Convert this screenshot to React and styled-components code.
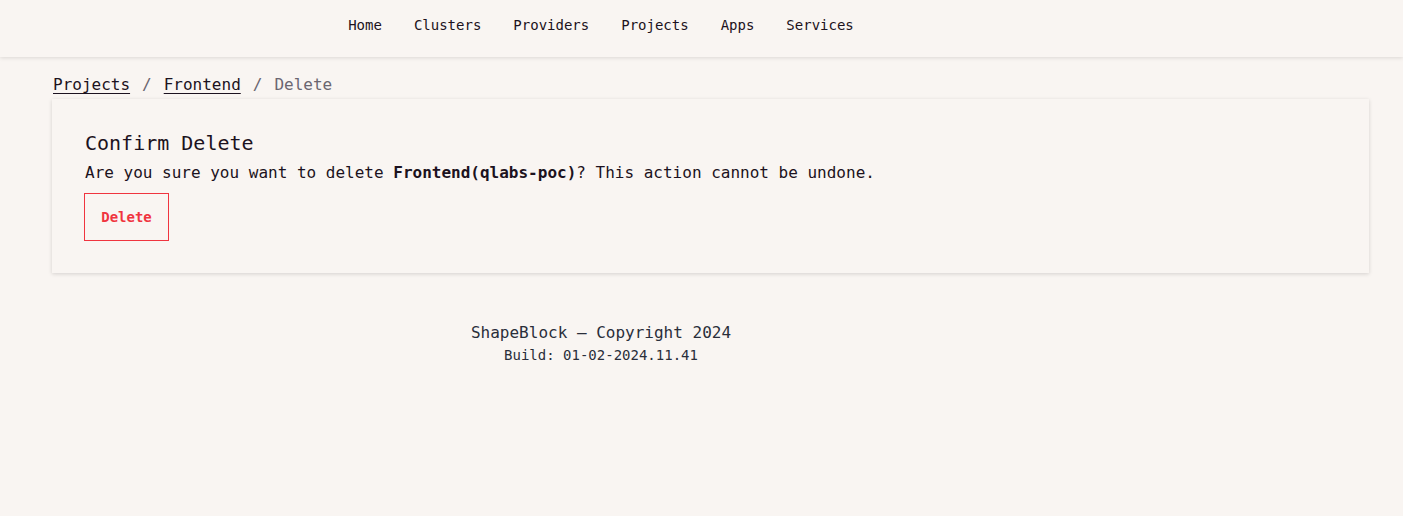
import React from "react";
import styled, { createGlobalStyle } from "styled-components";

const GlobalStyle = createGlobalStyle`
  body {
    margin: 0;
    background: #f9f5f2;
    color: #1c1220;
    font-family: "DejaVu Sans Mono", "Liberation Mono", monospace;
  }
`;

const NavBar = styled.header`
  height: 57px;
  background: #f9f5f2;
  box-shadow: 0 1px 4px rgba(0, 0, 0, 0.12);
`;

const NavList = styled.nav`
  width: 1202px;
  height: 50px;
  display: flex;
  justify-content: center;
  align-items: center;
  gap: 32px;
`;

const NavLink = styled.a`
  font-size: 14px;
  color: #1c1220;
  text-decoration: none;
`;

const Main = styled.main`
  padding: 16px 34px 0 52px;
`;

const Crumbs = styled.div`
  display: flex;
  gap: 12px;
  font-size: 16px;
  line-height: 24px;
  padding-left: 1px;
  color: #6b6670;
`;

const CrumbLink = styled.a`
  color: #1c1220;
  text-decoration: underline;
  text-underline-offset: 3px;
`;

const Card = styled.section`
  margin-top: 2px;
  padding: 32px 32px 32px 33px;
  background: #f9f5f2;
  box-shadow: 0 1px 4px rgba(0, 0, 0, 0.15);
`;

const Title = styled.h2`
  margin: 0;
  font-size: 20px;
  font-weight: 400;
  line-height: 24px;
`;

const Message = styled.p`
  margin: 6px 0 0;
  font-size: 16px;
  line-height: 24px;
`;

const DangerButton = styled.button`
  margin: 8px 0 0 -1px;
  height: 48px;
  width: 85px;
  background: transparent;
  border: 1px solid #f0343f;
  color: #f0343f;
  font-family: inherit;
  font-size: 14px;
  font-weight: 700;
  cursor: pointer;
  display: block;
`;

const Footer = styled.footer`
  width: 1202px;
  margin-top: 48px;
  text-align: center;
  color: #2a2e3a;
`;

const FooterLine = styled.div`
  font-size: ${(p) => (p.small ? "14px" : "16px")};
  line-height: ${(p) => (p.small ? "20px" : "24px")};
`;

const App = () => {
  const links = ["Home", "Clusters", "Providers", "Projects", "Apps", "Services"];
  return (
    <>
      <GlobalStyle />
      <NavBar>
        <NavList>
          {links.map((l) => (
            <NavLink key={l} href="#">{l}</NavLink>
          ))}
        </NavList>
      </NavBar>
      <Main>
        <Crumbs>
          <CrumbLink href="#">Projects</CrumbLink>
          <span>/</span>
          <CrumbLink href="#">Frontend</CrumbLink>
          <span>/</span>
          <span>Delete</span>
        </Crumbs>
        <Card>
          <Title>Confirm Delete</Title>
          <Message>
            Are you sure you want to delete <b>Frontend(qlabs-poc)</b>? This action cannot be undone.
          </Message>
          <DangerButton>Delete</DangerButton>
        </Card>
      </Main>
      <Footer>
        <FooterLine>ShapeBlock — Copyright 2024</FooterLine>
        <FooterLine small>Build: 01-02-2024.11.41</FooterLine>
      </Footer>
    </>
  );
};

export default App;
